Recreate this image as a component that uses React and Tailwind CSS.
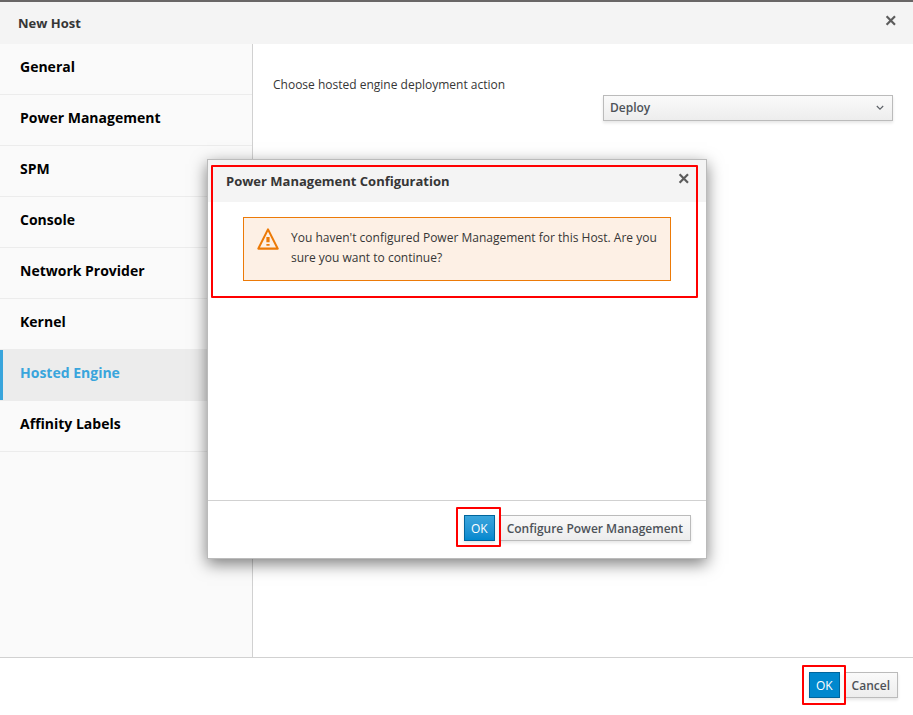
import clsx from "clsx";

const sections = [
  "General",
  "Power Management",
  "SPM",
  "Console",
  "Network Provider",
  "Kernel",
  "Hosted Engine",
  "Affinity Labels",
];

const CloseButton = () => (
  <button type="button" aria-label="Close" className="mt-3 flex size-3 items-center justify-center text-[#5c5c5c]">
    <svg viewBox="0 0 12 12" className="size-3" fill="none" stroke="currentColor" strokeWidth="2.2">
      <path d="M1.6 2.3 10 10.7M10 2.3 1.6 10.7" />
    </svg>
  </button>
);

const DialogHeader = ({ title }) => (
  <header className="flex h-[42px] items-start justify-between bg-[#f4f4f4] pr-4 pl-[18px]">
    <h2 className="text-[13px] leading-[42px] font-bold text-[#363636]">{title}</h2>
    <CloseButton />
  </header>
);

const Button = ({ primary, className, children }) => (
  <button
    type="button"
    className={clsx(
      "h-[26px] border pt-0.5 text-xs leading-5 whitespace-nowrap shadow-[0_2px_3px_rgba(3,3,3,0.1)]",
      primary
        ? "border-[#00659c] px-1.5 font-medium text-white"
        : "border-[#bbb] bg-linear-to-b from-[#fafafa] to-[#ededed] px-[7px] font-semibold text-[#4d5258]",
      className
    )}
  >
    {children}
  </button>
);

const Highlight = ({ className }) => (
  <span className={clsx("pointer-events-none absolute z-10 rounded-[1px] border-2 border-[#ff0000]", className)} />
);

const WarningIcon = () => (
  <svg viewBox="0 0 22 22" className="h-[22px] w-[22px] shrink-0" fill="none">
    <path d="M11 1.4 20.7 20.6H1.3Z" stroke="#ec7a08" strokeWidth="2.1" strokeLinejoin="round" />
    <path d="M9.4 9h3.2v5.2H9.4ZM9.4 16h3.2v1.8H9.4Z" fill="#ec7a08" />
  </svg>
);

const SideNav = () => (
  <nav className="w-[253px] shrink-0 border-r border-[#d1d1d1] bg-[#fafafa]">
    <ul>
      {sections.map((name) => {
        const active = name === "Hosted Engine";
        return (
          <li key={name} className={clsx("border-b border-[#ececec]", active && "bg-[#ececec]")}>
            <a
              href="#"
              className={clsx(
                "block h-[50px] border-l-3 pt-[13px] pl-[17px] text-sm leading-5 font-bold",
                active ? "border-[#39a5dc] text-[#39a5dc]" : "border-transparent text-black"
              )}
            >
              {name}
            </a>
          </li>
        );
      })}
    </ul>
  </nav>
);

const DeployForm = () => (
  <div className="flex-1 px-5 pt-[31px]">
    <label htmlFor="deploy-action" className="block h-5 text-xs leading-5 text-[#363636]">
      Choose hosted engine deployment action
    </label>
    <div className="relative ml-auto flex w-[290px]">
      <select
        id="deploy-action"
        defaultValue="Deploy"
        className="h-[26px] w-full appearance-none border border-[#bbb] bg-linear-to-b from-[#fafafa] to-[#ededed] px-1.5 text-xs font-semibold text-[#4d5258] shadow-[0_2px_3px_rgba(3,3,3,0.1)]"
      >
        <option>None</option>
        <option>Deploy</option>
      </select>
      <svg
        viewBox="0 0 8 6"
        className="pointer-events-none absolute top-[10px] right-[9px] h-1.5 w-2"
        fill="none"
        stroke="#5c6066"
        strokeWidth="1.1"
      >
        <path d="M.8 1 4 4.2 7.2 1" />
      </svg>
    </div>
  </div>
);

const PowerManagementDialog = () => (
  <div className="absolute inset-0 flex items-start justify-center pt-[157px] pl-px">
    <div
      role="dialog"
      aria-label="Power Management Configuration"
      className="relative flex h-[400px] w-[500px] flex-col border border-[#bbb] bg-white shadow-[0_5px_15px_rgba(0,0,0,0.5)]"
    >
      <Highlight className="top-[5px] right-2 left-[3px] h-[133px]" />
      <DialogHeader title="Power Management Configuration" />
      <div className="flex-1 px-[35px] pt-[15px]">
        <div role="alert" className="flex gap-3 border border-[#ec7a08] bg-[#fdf0e5] px-[13px] pt-[10px] pb-3">
          <WarningIcon />
          <p className="text-xs leading-5 text-[#363636]">
            You haven't configured Power Management for this Host. Are you sure you want to continue?
          </p>
        </div>
      </div>
      <footer className="flex h-[58px] items-start justify-end gap-1 border-t border-[#d1d1d1] pt-[14px] pr-[15px]">
        <div className="relative flex">
          <Button primary className="bg-linear-to-b from-[#39a5dc] to-[#0088ce]">
            OK
          </Button>
          <Highlight className="-top-2 -right-1.5 -bottom-1.5 -left-2" />
        </div>
        <Button>Configure Power Management</Button>
      </footer>
    </div>
  </div>
);

export default function App() {
  return (
    <main className="relative flex min-h-screen flex-col border-t-2 border-[#696666] bg-white font-['Open_Sans',sans-serif]">
      <DialogHeader title="New Host" />
      <div className="flex flex-1">
        <SideNav />
        <DeployForm />
      </div>
      <footer className="flex h-[58px] items-start justify-end gap-1 border-t border-[#d1d1d1] pt-[14px] pr-[15px]">
        <div className="relative flex">
          <Button primary className="bg-[#0088ce]">
            OK
          </Button>
          <Highlight className="-top-[7px] -right-1.5 -bottom-[7px] -left-[7px]" />
        </div>
        <Button>Cancel</Button>
      </footer>
      <PowerManagementDialog />
    </main>
  );
}
